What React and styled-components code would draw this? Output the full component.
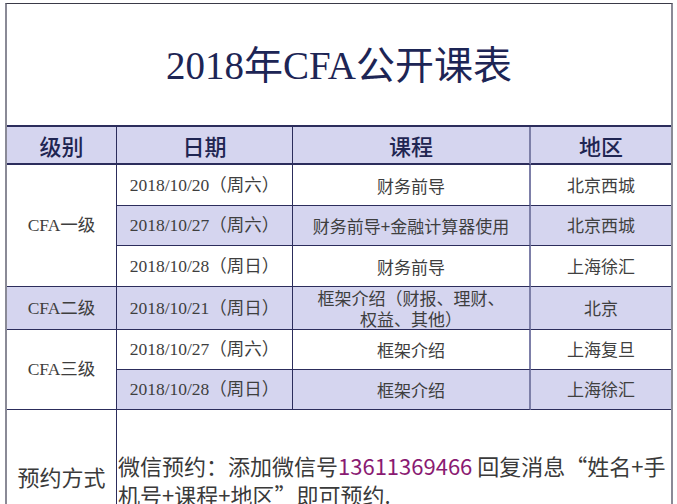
import React from 'react';
import styled, { createGlobalStyle } from 'styled-components';

const GlobalStyle = createGlobalStyle`
  html, body {
    margin: 0;
    padding: 0;
    background: #ffffff;
  }
  body {
    font-family: "Noto Sans CJK SC", sans-serif;
  }
`;

const NAVY = '#2c2d5c';
const SHADE = '#d5d5ef';

const Page = styled.div`
  padding: 3px 4px 0 5px;
  width: 677px;
  height: 504px;
  box-sizing: border-box;
  overflow: hidden;
`;

const Sheet = styled.div`
  border-left: 2px solid #8a8a96;
  border-right: 2px solid #8a8a96;
  border-top: 1px solid #3a3a48;
`;

const TitleBox = styled.div`
  height: 121px;
  display: flex;
  align-items: center;
  justify-content: center;
  padding-bottom: 6px;
  box-sizing: border-box;
`;

const Title = styled.h1`
  margin: 0;
  font-family: "Liberation Serif", "Noto Sans CJK SC", serif;
  font-weight: 400;
  font-size: 39px;
  color: #1d2555;
`;

const Grid = styled.div`
  display: grid;
  grid-template-columns: 110px 176px 238px 1fr;
  grid-template-rows: 38px 41px 40px 41px 43px 40px 40px 140px;
  border-top: 2px solid ${NAVY};
`;

const Cell = styled.div`
  box-sizing: border-box;
  display: flex;
  align-items: center;
  justify-content: center;
  text-align: center;
  background: ${({ $shade }) => ($shade ? SHADE : '#ffffff')};
  border-bottom: 1px solid ${NAVY};
  border-right: ${({ $edge }) =>
    $edge === 'last'
      ? 'none'
      : $edge === 'light'
      ? '2px solid #7d7fa8'
      : `1px solid ${NAVY}`};
  grid-row: ${({ $rows }) => $rows || 'auto'};
  grid-column: ${({ $cols }) => $cols || 'auto'};
  color: #404040;
  font-size: 17px;
  line-height: 1.2;
`;

const HeadCell = styled(Cell)`
  background: ${SHADE};
  color: #1f2552;
  font-size: 22px;
  font-weight: 500;
  border-bottom: 2px solid ${NAVY};
  padding-top: 1px;
`;

const SerifText = styled.span`
  font-family: "Liberation Serif", "Noto Sans CJK SC", serif;
  font-size: 17.5px;
  color: #3e3e3e;
`;

const CourseText = styled.span`
  font-size: 17px;
  color: #3e3e3e;
  line-height: 21px;
`;

const FooterLabel = styled(Cell)`
  align-items: flex-start;
  font-size: 22px;
  color: #3a3a3a;
  border-bottom: none;
  padding-top: 53px;
`;

const FooterBody = styled(Cell)`
  justify-content: flex-start;
  align-items: flex-start;
  text-align: left;
  border-bottom: none;
  padding: 41px 0 0 1px;
  font-size: 22px;
  line-height: 29px;
  color: #3a3a3a;
  white-space: nowrap;
`;

const Phone = styled.span`
  color: #8a1a72;
`;

const rows = [
  { date: '2018/10/20（周六）', course: '财务前导', place: '北京西城', shade: false },
  { date: '2018/10/27（周六）', course: '财务前导+金融计算器使用', place: '北京西城', shade: true },
  { date: '2018/10/28（周日）', course: '财务前导', place: '上海徐汇', shade: false },
  { date: '2018/10/21（周日）', course: '框架介绍（财报、理财、\n权益、其他）', place: '北京', shade: true },
  { date: '2018/10/27（周六）', course: '框架介绍', place: '上海复旦', shade: false },
  { date: '2018/10/28（周日）', course: '框架介绍', place: '上海徐汇', shade: true },
];

const levels = [
  { label: 'CFA一级', rows: '2 / 5', shade: false },
  { label: 'CFA二级', rows: '5 / 6', shade: true },
  { label: 'CFA三级', rows: '6 / 8', shade: false },
];

const App = () => (
  <>
    <GlobalStyle />
    <Page>
      <Sheet>
        <TitleBox>
          <Title>2018年CFA公开课表</Title>
        </TitleBox>
        <Grid>
          <HeadCell>级别</HeadCell>
          <HeadCell>日期</HeadCell>
          <HeadCell $edge='light'>课程</HeadCell>
          <HeadCell $edge='last'>地区</HeadCell>

          {levels.map((lv) => (
            <Cell key={lv.label} $rows={lv.rows} $cols='1 / 2' $shade={lv.shade}>
              <SerifText>{lv.label}</SerifText>
            </Cell>
          ))}

          {rows.map((r, i) => (
            <React.Fragment key={i}>
              <Cell $rows={`${i + 2} / ${i + 3}`} $cols='2 / 3' $shade={r.shade}>
                <SerifText>{r.date}</SerifText>
              </Cell>
              <Cell
                $rows={`${i + 2} / ${i + 3}`}
                $cols='3 / 4'
                $shade={r.shade}
                $edge='light'
              >
                <CourseText>
                  {r.course.split('\n').map((line, j) => (
                    <React.Fragment key={j}>
                      {j > 0 && <br />}
                      {line}
                    </React.Fragment>
                  ))}
                </CourseText>
              </Cell>
              <Cell
                $rows={`${i + 2} / ${i + 3}`}
                $cols='4 / 5'
                $shade={r.shade}
                $edge='last'
              >
                {r.place}
              </Cell>
            </React.Fragment>
          ))}

          <FooterLabel $rows='8 / 9' $cols='1 / 2'>
            预约方式
          </FooterLabel>
          <FooterBody $rows='8 / 9' $cols='2 / 5' $edge='last'>
            <div>
              微信预约：添加微信号<Phone>13611369466</Phone> 回复消息“姓名+手
              <br />
              机号+课程+地区”即可预约.
            </div>
          </FooterBody>
        </Grid>
      </Sheet>
    </Page>
  </>
);

export default App;
